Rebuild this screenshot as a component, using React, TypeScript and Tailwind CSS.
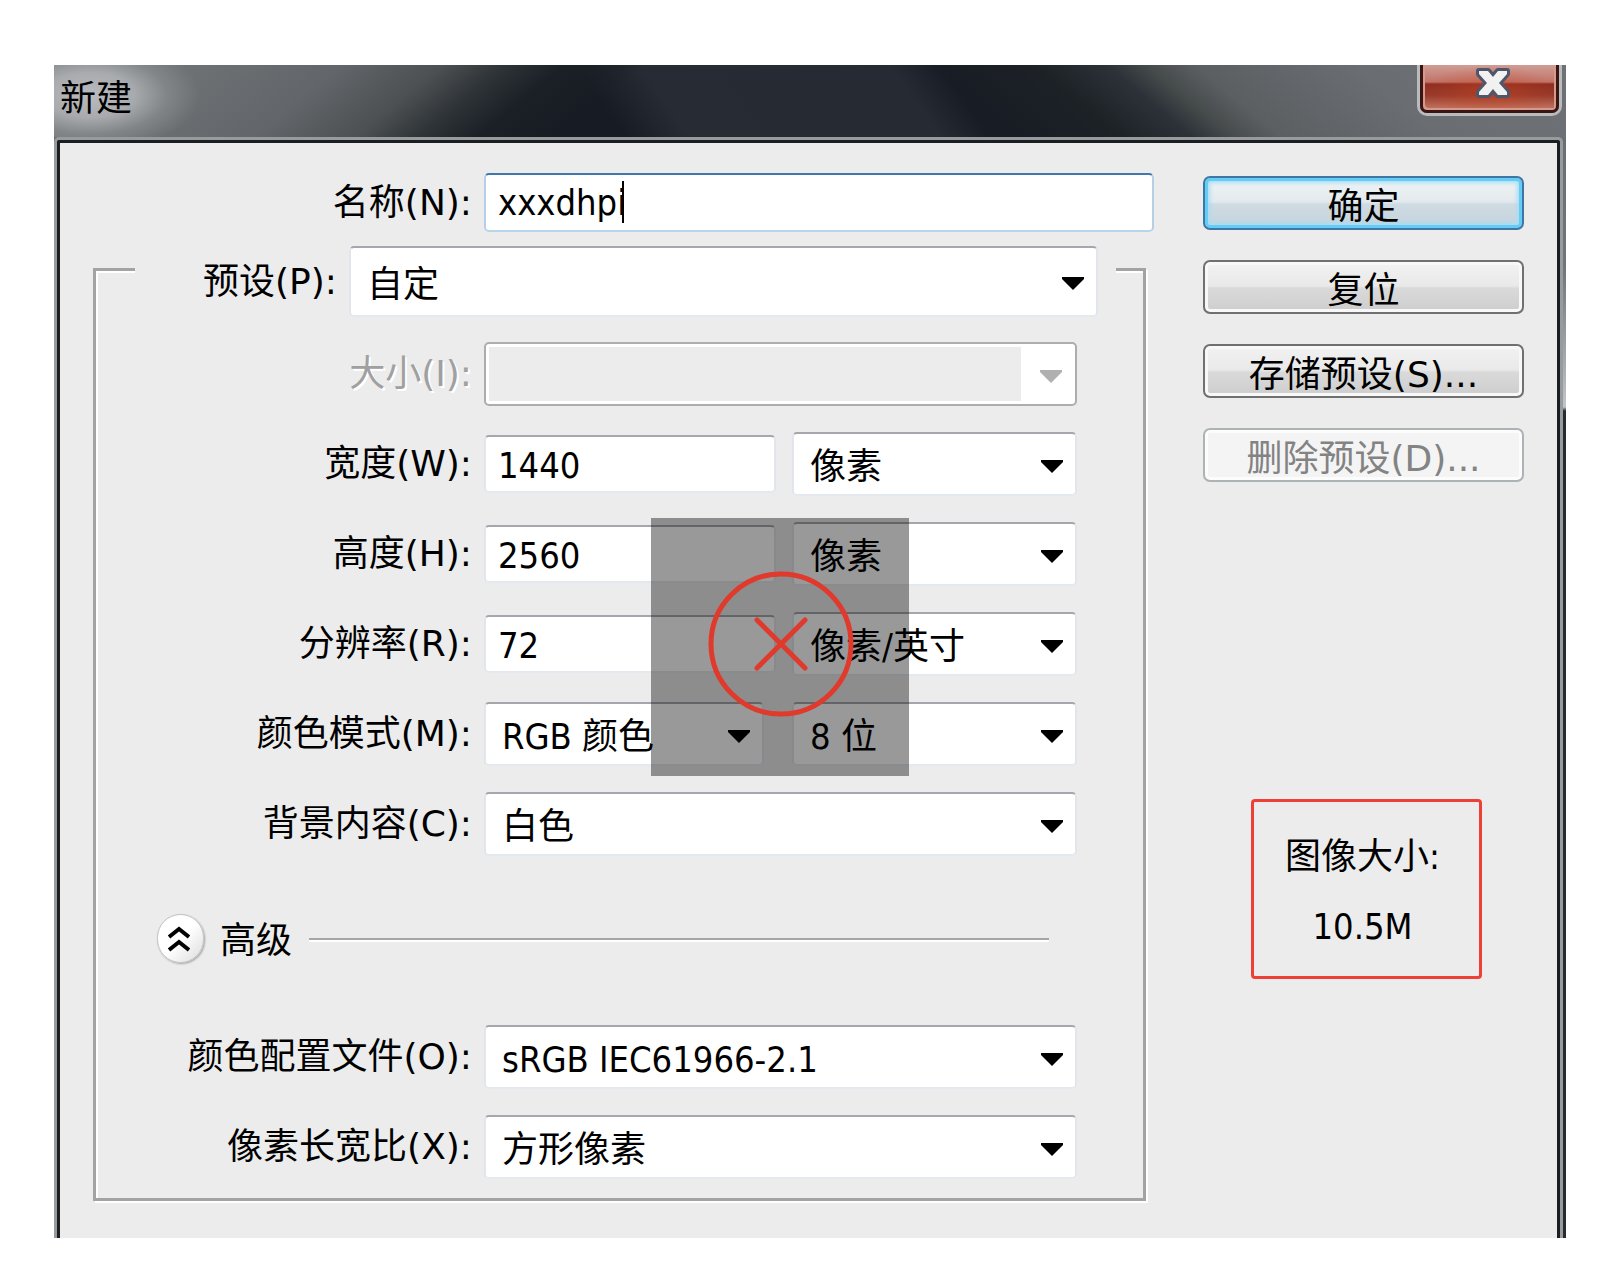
import React from "react";

const BOX =
  "border-2 border-x-[#e2e5ec] border-b-[#e3e9ef] border-t-[#a6a7ac] rounded-[5px] bg-white text-black outline-none";

const WIDE = "font-['DejaVu_Sans','Noto_Sans_CJK_SC',sans-serif]";

function Arrow({ className }: { className: string }) {
  return (
    <svg width="22" height="13" viewBox="0 0 22 13" className={className} aria-hidden="true">
      <path d="M0 0H22V2L11 13L0 2Z" fill="currentColor" />
    </svg>
  );
}

function Label({ id, children, className = "w-[376px]" }: { id: string; children: React.ReactNode; className?: string }) {
  return (
    <label htmlFor={id} className={`shrink-0 whitespace-nowrap text-right ${WIDE} ${className}`}>
      {children}
    </label>
  );
}

function Select({ id, value, label, className = "h-16" }: { id: string; value: string; label?: string; className?: string }) {
  return (
    <div className={`relative min-w-0 flex-1 ${className}`}>
      <select id={id} aria-label={label} defaultValue={value} className={`h-full w-full appearance-none pl-4 pr-10 pt-1.5 ${BOX}`}>
        <option>{value}</option>
      </select>
      <div className="pointer-events-none absolute inset-y-0 right-3.5 flex items-center pt-1">
        <Arrow className="text-black" />
      </div>
    </div>
  );
}

function UnitRow({ id, label, value, unit }: { id: string; label: string; value: string; unit: string }) {
  return (
    <div className="flex h-16 items-center gap-3">
      <Label id={id}>{label}</Label>
      <div className="flex min-w-0 flex-1 items-center gap-4">
        <input id={id} defaultValue={value} className={`h-[58px] w-0 min-w-0 flex-1 pl-3 pt-0.5 ${BOX}`} />
        <div className="flex w-[285px] shrink-0">
          <Select id={`${id}-unit`} label={`${label} 单位`} value={unit} />
        </div>
      </div>
    </div>
  );
}

function Button({ children, primary, disabled }: { children: React.ReactNode; primary?: boolean; disabled?: boolean }) {
  const look = primary
    ? "border-[#3f76a5] text-black bg-[linear-gradient(#f1f4f6_0%,#e3e9ed_48%,#d0dbe2_52%,#c3d3dd_100%)] shadow-[inset_0_0_0_3px_#63cdf5,inset_0_0_4px_5px_#a9def3]"
    : disabled
      ? "border-[#adb2b5] text-[#838383] bg-[#f4f4f4] shadow-[inset_0_0_0_3px_#fcfcfc]"
      : "border-[#707070] text-black bg-[linear-gradient(#f2f2f2_0%,#e9e9e9_48%,#dadada_52%,#cdcdcd_100%)] shadow-[inset_0_0_0_3px_#f8f8f8]";
  return (
    <button
      type="button"
      disabled={disabled}
      className={`flex h-[54px] w-full items-center justify-center whitespace-nowrap rounded-[7px] border-2 pt-2 ${WIDE} ${look}`}
    >
      {children}
    </button>
  );
}

export default function App() {
  return (
    <main className="min-h-screen bg-white pb-8 pl-[54px] pr-[46px] pt-[65px] font-['DejaVu_Sans_Condensed','Noto_Sans_CJK_SC',sans-serif] text-[36px] leading-[48px] text-black">
      <section aria-label="新建" className="bg-[#171b20]">
        <header className="flex h-[72px] items-start justify-between bg-[radial-gradient(ellipse_110px_56px_at_36px_30px,#b9bbbe_0%,#b1b3b6dd_40%,#a0a3a666_70%,#8d909400_100%),linear-gradient(140deg,#74787b_0px,#6c7073_102px,#626569_186px,#4c5052_250px,#2e3337_290px,#1b2027_328px,transparent_380px),linear-gradient(220deg,#6e7175_0px,#6a6d71_135px,#5c5f62_238px,#454a4b_270px,#2d3239_295px,#1d2227_340px,transparent_405px),linear-gradient(55deg,#171b23_0px,#171b23_468px,#272b33_521px,#262a32_726px,#181c24_767px)]">
          <h1 className="pl-1.5 pt-2.5">新建</h1>
          <button
            type="button"
            aria-label="关闭"
            className="mr-1 h-[51px] w-[145px] rounded-b-[10px] border-[3px] border-t-0 border-[#b9bbbd]"
          >
            <span className="flex h-full w-full items-start justify-center rounded-b-[7px] border-[3px] border-t-0 border-[#3b1511] bg-[radial-gradient(ellipse_70px_26px_at_50%_60%,#c4452188_0%,transparent_100%),linear-gradient(#cf9d95_0px,#c2746a_17px,#8d2d20_19px,#96392b_30px,#c67a66_45px)] pl-1.5 pt-[3px] shadow-[inset_2px_-2px_0_#d49a8e,inset_-2px_0_0_#d49a8e]">
              <svg width="34" height="30" viewBox="0 0 34 30" aria-hidden="true">
                <path
                  d="M3 3H12L17 9L22 3H31V6L23 15L31 24V27H22L17 21L12 27H3V24L11 15L3 6Z"
                  fill="#f1f1f1"
                  stroke="#50556a"
                  strokeWidth="6"
                  strokeLinejoin="round"
                />
                <path d="M3 3H12L17 9L22 3H31V6L23 15L31 24V27H22L17 21L12 27H3V24L11 15L3 6Z" fill="#f1f1f1" />
              </svg>
            </span>
          </button>
        </header>

        <div className="bg-[linear-gradient(#6b6f73_0px,#70757a_130px,#c2c4c6_270px,#262b2f_274px)] pr-[3px]">
          <div className="rounded-t-[5px] border-x-[3px] border-t-[3px] border-[#989b9e]">
            <form
              className="flex rounded-t-[3px] border-x-[3px] border-t-[3px] border-[#1b1f22] bg-[#ececec] pb-[37px] pl-[33px] pr-[33px] pt-[30px]"
              onSubmit={(e) => e.preventDefault()}
            >
              <div className="min-w-0 flex-1">
                <div className="flex h-[59px] items-center gap-3">
                  <Label id="name" className="w-[379px]">名称(N):</Label>
                  <div className="relative h-full min-w-0 flex-1">
                    <input
                      id="name"
                      defaultValue="xxxdhpi"
                      className="h-full w-full rounded-[5px] border-2 border-x-[#b5cfe7] border-b-[#b7d5ea] border-t-[#3f78ae] bg-white pl-3 outline-none"
                    />
                    <span className="absolute left-[138px] top-2 h-[42px] w-[2px] bg-black" />
                  </div>
                </div>

                <fieldset
                  aria-label="预设"
                  className="relative mr-2 mt-9 min-w-0 border-[3px] border-[#a3a3a3] pb-[19px] shadow-[2px_2px_0_#fff,inset_2px_2px_0_#fff]"
                >
                  <div className="-mt-[25px] ml-[39px] mr-[27px] flex h-[71px] items-center gap-3 bg-[#ececec] pr-[18px]">
                    <Label id="preset" className="w-[202px]">预设(P):</Label>
                    <Select id="preset" value="自定" className="h-full" />
                  </div>

                  <div className="mt-[25px] flex flex-col gap-[26px] pr-[66px]">
                    <div className="flex h-16 items-center gap-3 text-[#a0a0a0]">
                      <Label id="size" className="w-[376px] [text-shadow:2px_2px_0_#fff]">大小(I):</Label>
                      <div className="flex h-full flex-1 rounded-[5px] border-2 border-[#adadad] bg-white p-[3px]">
                        <select id="size" disabled className="min-w-0 flex-1 appearance-none bg-[#ececec]" />
                        <div className="flex w-[51px] items-center justify-center pl-2 pt-1">
                          <Arrow className="text-[#b0b0b0]" />
                        </div>
                      </div>
                    </div>

                    <UnitRow id="width" label="宽度(W):" value="1440" unit="像素" />
                    <UnitRow id="height" label="高度(H):" value="2560" unit="像素" />
                    <UnitRow id="resolution" label="分辨率(R):" value="72" unit="像素/英寸" />

                    <div className="flex h-16 items-center gap-3">
                      <Label id="mode">颜色模式(M):</Label>
                      <div className="flex min-w-0 flex-1 gap-7">
                        <Select id="mode" value="RGB 颜色" />
                        <div className="flex w-[285px] shrink-0">
                          <Select id="depth" label="位深度" value="8 位" />
                        </div>
                      </div>
                    </div>

                    <div className="flex h-16 items-center gap-3">
                      <Label id="background">背景内容(C):</Label>
                      <Select id="background" value="白色" />
                    </div>

                    <div className="mb-1 flex h-[113px] items-center pl-[61px]">
                      <button
                        type="button"
                        aria-label="收起高级选项"
                        className="flex h-[49px] w-[47px] items-center justify-center rounded-full border border-[#c2c2c2] bg-[linear-gradient(135deg,#fff_50%,#dcdcdc_100%)] shadow-[1px_1px_2px_#a4a4a4]"
                      >
                        <svg width="22" height="26" viewBox="0 0 22 26" fill="none" stroke="#000" strokeWidth="4" className="mr-1" aria-hidden="true">
                          <path d="M1 11L11 3L21 11M1 24L11 16L21 24" />
                        </svg>
                      </button>
                      <span className="ml-4 mr-[17px] pt-1">高级</span>
                      <span className="mr-7 h-[2px] flex-1 bg-[#a6a6a6] shadow-[0_2px_0_#fff]" />
                    </div>

                    <div className="flex h-16 items-center gap-3">
                      <Label id="profile">颜色配置文件(O):</Label>
                      <Select id="profile" value="sRGB IEC61966-2.1" />
                    </div>
                    <div className="flex h-16 items-center gap-3">
                      <Label id="ratio">像素长宽比(X):</Label>
                      <Select id="ratio" value="方形像素" />
                    </div>
                  </div>

                  <div className="pointer-events-none absolute left-[555px] top-[247px] flex h-[258px] w-[258px] items-center justify-center bg-black/40">
                    <svg width="148" height="148" viewBox="0 0 148 148" fill="none" stroke="#e03a2c" strokeWidth="5" strokeLinecap="round" className="overflow-visible" aria-hidden="true">
                      <circle cx="75" cy="71" r="70" />
                      <path d="M51 47L99 95M99 47L51 95" />
                    </svg>
                  </div>
                </fieldset>
              </div>

              <div className="ml-[49px] flex w-[321px] shrink-0 flex-col gap-[30px] pt-[3px]">
                <Button primary>确定</Button>
                <Button>复位</Button>
                <Button>存储预设(S)...</Button>
                <Button disabled>删除预设(D)...</Button>
                <div className="ml-12 mt-[287px] w-[231px] rounded-[4px] border-[3px] border-[#ee4036] pb-3.5 pr-2 pt-5 text-center leading-[70px]">
                  <p>图像大小:</p>
                  <p>10.5M</p>
                </div>
              </div>
            </form>
          </div>
        </div>
      </section>
    </main>
  );
}
